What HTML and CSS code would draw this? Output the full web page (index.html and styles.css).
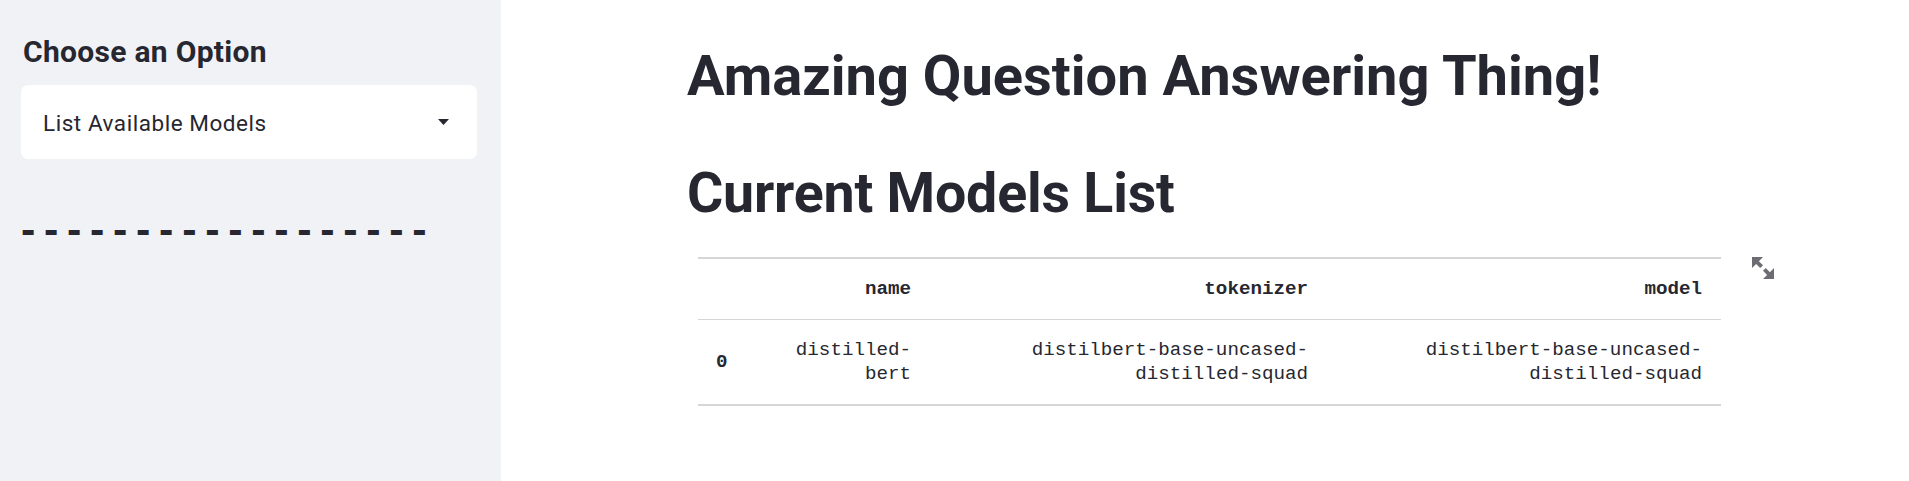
FILE: index.html
```html
<!DOCTYPE html>
<html lang="en">
<head>
<meta charset="utf-8">
<title>Amazing Question Answering Thing!</title>
<link rel="stylesheet" href="styles.css">
</head>
<body>
<div class="app">
  <aside class="sidebar">
    <h2 class="side-title">Choose an Option</h2>
    <div class="select">
      <span class="select-value">List Available Models</span>
      <svg class="select-caret" width="11" height="6" viewBox="0 0 11 6"><path d="M0 0h11L5.5 6z" fill="#262730"/></svg>
    </div>
    <p class="dashes">------------------</p>
  </aside>
  <main class="main">
    <div class="block">
      <h1 class="title">Amazing Question Answering Thing!</h1>
      <h1 class="title second">Current Models List</h1>
      <div class="table-wrap">
        <table class="models">
          <colgroup>
            <col class="c-idx">
            <col class="c-name">
            <col class="c-tok">
            <col class="c-model">
          </colgroup>
          <thead>
            <tr><th class="blank"></th><th>name</th><th>tokenizer</th><th>model</th></tr>
          </thead>
          <tbody>
            <tr>
              <th class="idx">0</th>
              <td>distilled-bert</td>
              <td>distilbert-base-uncased-distilled-squad</td>
              <td>distilbert-base-uncased-distilled-squad</td>
            </tr>
          </tbody>
        </table>
        <button class="fullscreen" aria-label="View fullscreen">
          <svg width="22" height="22" viewBox="0 0 8 8"><path fill="#6c6c72" d="M0 0v4l1.5-1.5 1.5 1.5 1-1-1.5-1.5 1.5-1.5h-4zm5 4l-1 1 1.5 1.5-1.5 1.5h4v-4l-1.5 1.5-1.5-1.5z"/></svg>
        </button>
      </div>
    </div>
  </main>
</div>
</body>
</html>
```
FILE: styles.css
```css
* { box-sizing: border-box; }
html, body { margin: 0; padding: 0; height: 100%; }
body {
  background: #ffffff;
  color: #262730;
  font-family: Roboto, "Noto Sans", sans-serif;
  overflow: hidden;
}
.app {
  display: flex;
  height: 100%;
}
.sidebar {
  width: 501px;
  flex: none;
  background: #f0f2f6;
  padding: 34px 24px 0 21px;
}
.side-title {
  margin: 0 0 0 2px;
  font-size: 30px;
  line-height: 36px;
  font-weight: 700;
  letter-spacing: 0.3px;
}
.select {
  margin-top: 15px;
  height: 74px;
  width: 456px;
  background: #ffffff;
  border-radius: 7px;
  display: flex;
  align-items: center;
  justify-content: space-between;
  padding: 2px 28px 0 22px;
}
.select-value {
  font-size: 22.5px;
  line-height: 30px;
  letter-spacing: 0.55px;
}
.select-caret { display: block; margin-top: -2px; }
.dashes {
  margin: 49px 0 0 0;
  font-family: "Liberation Sans", Arial, sans-serif;
  font-weight: 700;
  font-size: 43px;
  line-height: 43px;
  letter-spacing: 8.7px;
  color: #262730;
}
.main {
  flex: 1;
  min-width: 0;
}
.block {
  width: 1036px;
  margin: 0 auto;
  padding-top: 42px;
}
.title {
  margin: 0;
  font-size: 56px;
  line-height: 68px;
  font-weight: 700;
  color: #262730;
}
.title.second {
  margin-top: 50px;
  font-size: 55.5px;
  letter-spacing: -0.2px;
}
.table-wrap {
  position: relative;
  margin-top: 29px;
  padding-left: 11px;
}
.models {
  width: 1023px;
  table-layout: fixed;
  border-collapse: collapse;
  font-family: "Liberation Mono", "DejaVu Sans Mono", monospace;
  font-size: 19.2px;
  line-height: 24px;
  color: #262730;
  border-top: 2px solid rgba(49, 51, 63, 0.2);
  border-bottom: 2px solid rgba(49, 51, 63, 0.2);
}
.c-idx { width: 46px; }
.c-name { width: 186px; }
.c-tok { width: 397px; }
.c-model { width: 394px; }
.models th, .models td {
  padding: 18px 19px;
  text-align: right;
  vertical-align: middle;
}
.models thead th {
  font-weight: 700;
  border-bottom: 1px solid rgba(49, 51, 63, 0.2);
}
.models td { font-weight: 400; }
.models th.idx {
  text-align: left;
  padding-left: 18px;
  font-weight: 700;
}
.fullscreen {
  position: absolute;
  left: 1065px;
  top: 0;
  width: 22px;
  height: 22px;
  padding: 0;
  border: 0;
  background: transparent;
}
.fullscreen svg { display: block; }
```
